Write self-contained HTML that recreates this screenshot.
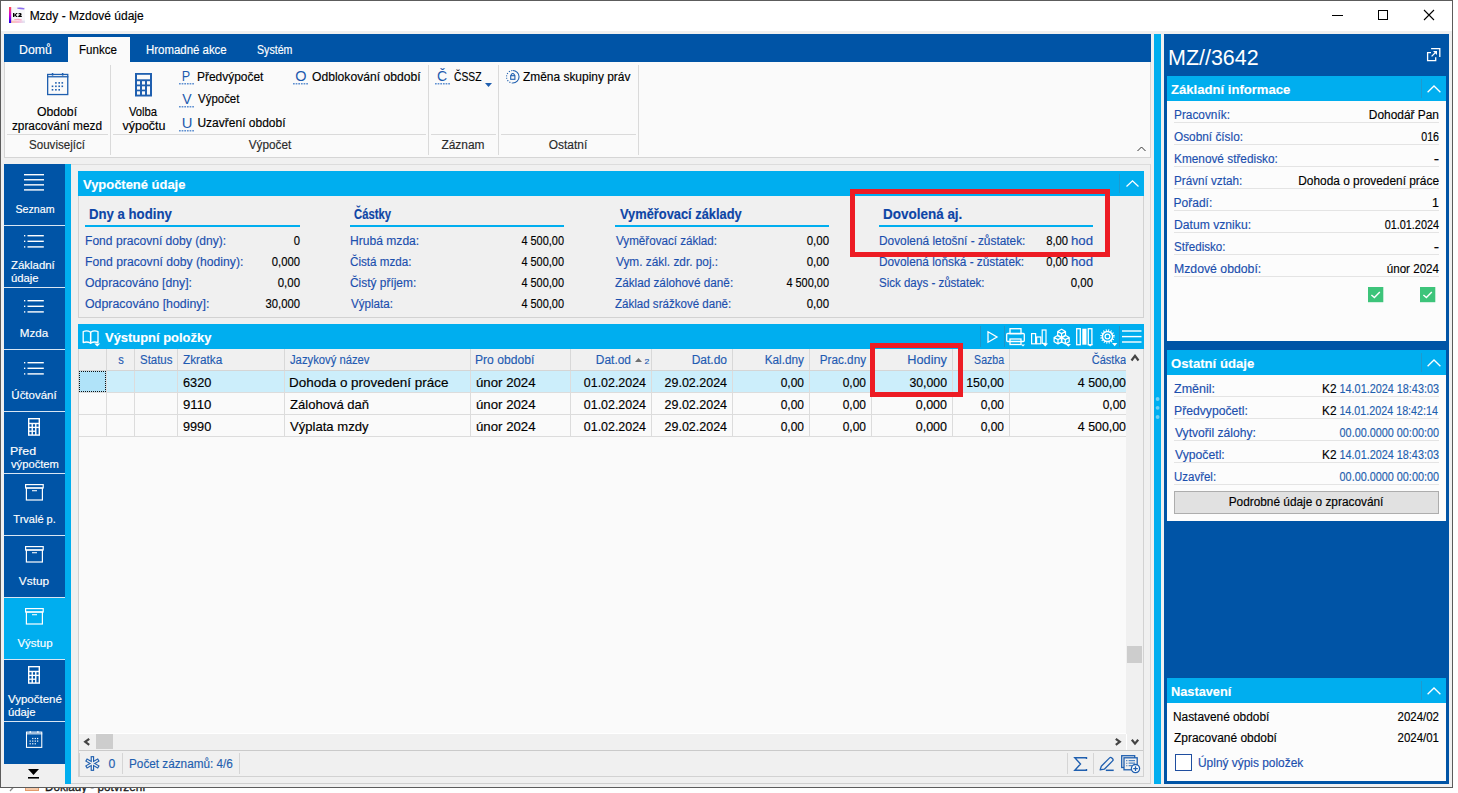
<!DOCTYPE html>
<html><head><meta charset="utf-8">
<style>
*{margin:0;padding:0;box-sizing:border-box}
html,body{width:1458px;height:793px;overflow:hidden;background:#fff;font-family:"Liberation Sans",sans-serif;color:#000;position:relative}
.a{position:absolute}
.t{position:absolute;white-space:nowrap;-webkit-text-stroke:0.15px currentColor}
svg{overflow:visible}
</style></head><body>
<div class="t" style="top:777.50px;font-size:13px;line-height:17px;color:#1a1a1a;left:44.57px;transform:scaleX(0.8962);transform-origin:0 0;-webkit-text-stroke:0.35px currentColor;">Doklady - potvrzení</div>
<div class="a" style="left:25px;top:781px;width:14px;height:10px;background:#F6C9A8;border:1px solid #E39B6C;"></div>
<svg class="a" style="left:9px;top:786px;" width="6" height="6" viewBox="0 0 6 6"><path d="M5 0.5L1 5" stroke="#888" stroke-width="1.2"/></svg>
<div class="a" style="left:0px;top:0px;width:1453px;height:788px;background:#F0F0F0;border:1px solid #5c5c5c;"></div>
<div class="a" style="left:1px;top:1px;width:1451px;height:30px;background:#fff;"></div>
<svg class="a" style="left:9px;top:7px;" width="16" height="16" viewBox="0 0 16 16"><defs><linearGradient id="kg" x1="0" y1="0" x2="0" y2="1"><stop offset="0" stop-color="#FF5050"/><stop offset=".5" stop-color="#D000D8"/><stop offset="1" stop-color="#1800E8"/></linearGradient><linearGradient id="kb" x1="0" y1="0" x2="1" y2="0"><stop offset="0" stop-color="#FF8A50"/><stop offset=".5" stop-color="#FF70B0"/><stop offset="1" stop-color="#C8D8F0"/></linearGradient></defs><rect x="0" y="0" width="16" height="16" fill="#F7F7FA"/><rect x="0" y="0" width="2.2" height="16" fill="url(#kg)"/><path d="M8 0.8Q12 0.2 15.5 1.2L15.2 2.6Q11.5 2.2 8.5 1.8Z" fill="#7A55F0" opacity=".85"/><rect x="2.2" y="13.6" width="13.8" height="2.4" fill="url(#kb)" opacity=".45"/><path d="M5 12.2Q9 11.2 13 12.4L12.5 13.5Q9 12.8 5.5 13.3Z" fill="#FF6FA0" opacity=".6"/><path d="M4 6H5.4V7.9L7.2 6H8.8L6.8 8L8.9 10H7.2L5.4 8.2V10H4Z M9.2 7Q9.6 6 11 6Q12.6 6 12.6 7.2Q12.6 8 11.3 8.8H12.8V10H9.2V9.1Q11.1 7.9 11.1 7.3Q11.1 6.9 10.8 6.9Q10.4 6.9 10.3 7.5Z" fill="#000"/></svg>
<div class="t" style="top:7.84px;font-size:12px;line-height:16px;color:#000;left:29.64px;">Mzdy - Mzdové údaje</div>
<div class="a" style="left:1332px;top:15px;width:11px;height:1px;background:#000;"></div>
<div class="a" style="left:1378px;top:10px;width:10px;height:10px;border:1px solid #000;"></div>
<svg class="a" style="left:1424px;top:10px;" width="10" height="10" viewBox="0 0 10 10"><path d="M0 0L10 10M10 0L0 10" stroke="#000" stroke-width="1.1"/></svg>
<div class="a" style="left:4px;top:34px;width:1147px;height:28px;background:#0054A6;"></div>
<div class="a" style="left:68px;top:37px;width:62px;height:25px;background:#FAFAFA;"></div>
<div class="t" style="top:41.84px;font-size:12px;line-height:16px;color:#fff;left:18.62px;transform:scaleX(1.0251);transform-origin:0 0;">Domů</div>
<div class="t" style="top:41.84px;font-size:12px;line-height:16px;color:#000;left:79.08px;transform:scaleX(0.9626);transform-origin:0 0;">Funkce</div>
<div class="t" style="top:41.84px;font-size:12px;line-height:16px;color:#fff;left:146.09px;transform:scaleX(0.9522);transform-origin:0 0;">Hromadné akce</div>
<div class="t" style="top:41.84px;font-size:12px;line-height:16px;color:#fff;left:256.58px;transform:scaleX(0.8849);transform-origin:0 0;">Systém</div>
<div class="a" style="left:4px;top:62px;width:1147px;height:96px;background:#FAFAFA;border:1px solid #D5D5D5;border-top:none;"></div>
<div class="a" style="left:110px;top:65px;width:1px;height:90px;background:#DADADA;"></div>
<div class="a" style="left:428px;top:65px;width:1px;height:90px;background:#DADADA;"></div>
<div class="a" style="left:498px;top:65px;width:1px;height:90px;background:#DADADA;"></div>
<div class="a" style="left:638px;top:65px;width:1px;height:90px;background:#DADADA;"></div>
<div class="a" style="left:7px;top:134px;width:101px;height:1px;background:#DADADA;"></div>
<div class="a" style="left:113px;top:134px;width:313px;height:1px;background:#DADADA;"></div>
<div class="a" style="left:431px;top:134px;width:65px;height:1px;background:#DADADA;"></div>
<div class="a" style="left:501px;top:134px;width:135px;height:1px;background:#DADADA;"></div>
<svg class="a" style="left:47px;top:73px;" width="22" height="23" viewBox="0 0 22 23"><g transform="scale(1.0)"><rect x="0.65" y="1.45" width="20.1" height="20.1" fill="none" stroke="#1F5FAF" stroke-width="1.3"/><rect x="0" y="3.1" width="21.4" height="1.3" fill="#1F5FAF"/><rect x="4.8" y="0" width="1.5" height="2.6" fill="#1F5FAF"/><rect x="14.9" y="0" width="1.5" height="2.6" fill="#1F5FAF"/><rect x="8.10" y="9.10" width="1.6" height="1.6" fill="#1F5FAF"/><rect x="11.40" y="9.10" width="1.6" height="1.6" fill="#1F5FAF"/><rect x="14.50" y="9.10" width="1.6" height="1.6" fill="#1F5FAF"/><rect x="4.70" y="12.50" width="1.6" height="1.6" fill="#1F5FAF"/><rect x="8.10" y="12.50" width="1.6" height="1.6" fill="#1F5FAF"/><rect x="11.40" y="12.50" width="1.6" height="1.6" fill="#1F5FAF"/><rect x="14.50" y="12.50" width="1.6" height="1.6" fill="#1F5FAF"/><rect x="4.70" y="16.00" width="1.6" height="1.6" fill="#1F5FAF"/><rect x="8.10" y="16.00" width="1.6" height="1.6" fill="#1F5FAF"/><rect x="11.40" y="16.00" width="1.6" height="1.6" fill="#1F5FAF"/></g></svg>
<svg class="a" style="left:135px;top:73px;" width="17" height="24" viewBox="0 0 17 24"><g transform="scale(1.0 1.0)"><rect x="0" y="0" width="17" height="23.5" fill="#1F5FAF"/><rect x="2" y="1.8" width="13" height="4.5" fill="#FAFAFA"/><rect x="2" y="8.2" width="3" height="3.3" fill="#FAFAFA"/><rect x="2" y="13.3" width="3" height="3.3" fill="#FAFAFA"/><rect x="2" y="18.3" width="3" height="3.3" fill="#FAFAFA"/><rect x="7" y="8.2" width="3" height="3.3" fill="#FAFAFA"/><rect x="7" y="13.3" width="3" height="3.3" fill="#FAFAFA"/><rect x="7" y="18.3" width="3" height="3.3" fill="#FAFAFA"/><rect x="12" y="8.2" width="3" height="3.3" fill="#FAFAFA"/><rect x="12" y="13.3" width="3" height="8.3" fill="#FAFAFA"/></g></svg>
<div class="t" style="top:104.24px;font-size:12px;line-height:16px;color:#000;left:-242.75px;width:600px;text-align:center;transform:scaleX(1.0211);transform-origin:50% 0;">Období</div>
<div class="t" style="top:118.14px;font-size:12px;line-height:16px;color:#000;left:-242.62px;width:600px;text-align:center;transform:scaleX(0.9863);transform-origin:50% 0;">zpracování mezd</div>
<div class="t" style="top:136.74px;font-size:12px;line-height:16px;color:#2a2a2a;left:-242.56px;width:600px;text-align:center;transform:scaleX(0.9635);transform-origin:50% 0;">Související</div>
<div class="t" style="top:103.64px;font-size:12px;line-height:16px;color:#000;left:-156.54px;width:600px;text-align:center;transform:scaleX(0.9396);transform-origin:50% 0;">Volba</div>
<div class="t" style="top:118.14px;font-size:12px;line-height:16px;color:#000;left:-156.09px;width:600px;text-align:center;transform:scaleX(1.0429);transform-origin:50% 0;">výpočtu</div>
<div class="t" style="top:66.20px;font-size:15px;line-height:20px;color:#1E5AAE;left:-113.61px;width:600px;text-align:center;transform:scaleX(0.8395);transform-origin:50% 0;-webkit-text-stroke:0;">P</div>
<svg class="a" style="left:179px;top:83.2px;" width="16" height="2" viewBox="0 0 16 2"><path d="M0 0.8H15.5" stroke="#5E8FD0" stroke-width="1.5" stroke-dasharray="1.7 0.95"/></svg>
<div class="t" style="top:68.64px;font-size:12px;line-height:16px;color:#000;left:197.34px;transform:scaleX(0.9960);transform-origin:0 0;">Předvýpočet</div>
<div class="t" style="top:89.00px;font-size:15px;line-height:20px;color:#1E5AAE;left:-113.42px;width:600px;text-align:center;transform:scaleX(0.9353);transform-origin:50% 0;-webkit-text-stroke:0;">V</div>
<svg class="a" style="left:179px;top:106.0px;" width="16" height="2" viewBox="0 0 16 2"><path d="M0 0.8H15.5" stroke="#5E8FD0" stroke-width="1.5" stroke-dasharray="1.7 0.95"/></svg>
<div class="t" style="top:91.44px;font-size:12px;line-height:16px;color:#000;left:198.30px;transform:scaleX(0.9553);transform-origin:0 0;">Výpočet</div>
<div class="t" style="top:112.70px;font-size:15px;line-height:20px;color:#1E5AAE;left:-113.38px;width:600px;text-align:center;transform:scaleX(0.9885);transform-origin:50% 0;-webkit-text-stroke:0;">U</div>
<svg class="a" style="left:179px;top:129.7px;" width="16" height="2" viewBox="0 0 16 2"><path d="M0 0.8H15.5" stroke="#5E8FD0" stroke-width="1.5" stroke-dasharray="1.7 0.95"/></svg>
<div class="t" style="top:115.14px;font-size:12px;line-height:16px;color:#000;left:197.46px;">Uzavření období</div>
<div class="t" style="top:66.20px;font-size:15px;line-height:20px;color:#1E5AAE;left:0.66px;width:600px;text-align:center;transform:scaleX(0.9662);transform-origin:50% 0;-webkit-text-stroke:0;">O</div>
<svg class="a" style="left:293px;top:83.2px;" width="16" height="2" viewBox="0 0 16 2"><path d="M0 0.8H15.5" stroke="#5E8FD0" stroke-width="1.5" stroke-dasharray="1.7 0.95"/></svg>
<div class="t" style="top:68.64px;font-size:12px;line-height:16px;color:#000;left:312.02px;transform:scaleX(1.0101);transform-origin:0 0;">Odblokování období</div>
<div class="t" style="top:137.24px;font-size:12px;line-height:16px;color:#2a2a2a;left:-30.04px;width:600px;text-align:center;transform:scaleX(0.9807);transform-origin:50% 0;">Výpočet</div>
<div class="t" style="top:66.20px;font-size:15px;line-height:20px;color:#1E5AAE;left:142.37px;width:600px;text-align:center;transform:scaleX(0.9375);transform-origin:50% 0;-webkit-text-stroke:0;">Č</div>
<svg class="a" style="left:435px;top:83.2px;" width="16" height="2" viewBox="0 0 16 2"><path d="M0 0.8H15.5" stroke="#5E8FD0" stroke-width="1.5" stroke-dasharray="1.7 0.95"/></svg>
<div class="t" style="top:68.64px;font-size:12px;line-height:16px;color:#000;left:453.78px;transform:scaleX(0.8591);transform-origin:0 0;">ČSSZ</div>
<svg class="a" style="left:485px;top:83px;" width="7" height="4" viewBox="0 0 7 4"><path d="M0 0H7L3.5 4Z" fill="#1F5FAF"/></svg>
<div class="t" style="top:137.24px;font-size:12px;line-height:16px;color:#2a2a2a;left:162.89px;width:600px;text-align:center;transform:scaleX(0.9943);transform-origin:50% 0;">Záznam</div>
<svg class="a" style="left:506px;top:70px;" width="14" height="14" viewBox="0 0 14 14"><path d="M6.8 0.55A6.25 6.25 0 0 1 6.8 13.05" fill="none" stroke="#1F5FAF" stroke-width="1.1"/><path d="M6.8 13.05A6.25 6.25 0 0 1 6.8 0.55" fill="none" stroke="#1F5FAF" stroke-width="1.1" stroke-dasharray="1.1 1.4"/><rect x="4.7" y="5.7" width="4.2" height="3.6" fill="none" stroke="#1F5FAF" stroke-width="1.1"/><path d="M5.2 5.7V4.7Q6.8 2.4 8.4 4.7V5.7" fill="none" stroke="#1F5FAF" stroke-width="1.1"/></svg>
<div class="t" style="top:68.64px;font-size:12px;line-height:16px;color:#000;left:523.44px;transform:scaleX(0.9941);transform-origin:0 0;">Změna skupiny práv</div>
<div class="t" style="top:137.24px;font-size:12px;line-height:16px;color:#2a2a2a;left:268.02px;width:600px;text-align:center;transform:scaleX(0.9927);transform-origin:50% 0;">Ostatní</div>
<svg class="a" style="left:1137px;top:145.5px;" width="9" height="6" viewBox="0 0 9 6"><path d="M0.5 5L4.5 1L8.5 5" fill="none" stroke="#333" stroke-width="1"/></svg>
<div class="a" style="left:4px;top:164px;width:61px;height:600px;background:#0054A6;"></div>
<div class="a" style="left:65px;top:164px;width:6px;height:620px;background:#00AEEF;"></div>
<div class="a" style="left:4px;top:598px;width:61px;height:61px;background:#00AEEF;"></div>
<div class="a" style="left:4px;top:225px;width:61px;height:1px;background:#D9E6F3;"></div>
<div class="a" style="left:4px;top:287px;width:61px;height:1px;background:#D9E6F3;"></div>
<div class="a" style="left:4px;top:349px;width:61px;height:1px;background:#D9E6F3;"></div>
<div class="a" style="left:4px;top:411px;width:61px;height:1px;background:#D9E6F3;"></div>
<div class="a" style="left:4px;top:473px;width:61px;height:1px;background:#D9E6F3;"></div>
<div class="a" style="left:4px;top:535px;width:61px;height:1px;background:#D9E6F3;"></div>
<div class="a" style="left:4px;top:597px;width:61px;height:1px;background:#D9E6F3;"></div>
<div class="a" style="left:4px;top:659px;width:61px;height:1px;background:#D9E6F3;"></div>
<div class="a" style="left:4px;top:721px;width:61px;height:1px;background:#D9E6F3;"></div>
<svg class="a" style="left:24px;top:174px;" width="20" height="17" viewBox="0 0 20 17"><rect x="0" y="0.00" width="20" height="1.4" fill="#fff"/><rect x="0" y="5.07" width="20" height="1.4" fill="#fff"/><rect x="0" y="10.14" width="20" height="1.4" fill="#fff"/><rect x="0" y="15.21" width="20" height="1.4" fill="#fff"/></svg>
<div class="t" style="top:201.99px;font-size:11px;line-height:14px;color:#fff;left:-265.30px;width:600px;text-align:center;transform:scaleX(0.9677);transform-origin:50% 0;">Seznam</div>
<svg class="a" style="left:24px;top:235px;" width="20" height="14" viewBox="0 0 20 14"><rect x="0" y="0.00" width="1.3" height="1.4" fill="#fff"/><rect x="3.5" y="0.00" width="16.3" height="1.4" fill="#fff"/><rect x="0" y="5.60" width="1.3" height="1.4" fill="#fff"/><rect x="3.5" y="5.60" width="16.3" height="1.4" fill="#fff"/><rect x="0" y="11.20" width="1.3" height="1.4" fill="#fff"/><rect x="3.5" y="11.20" width="16.3" height="1.4" fill="#fff"/></svg>
<div class="t" style="top:257.59px;font-size:11px;line-height:14px;color:#fff;left:10.96px;transform:scaleX(1.0379);transform-origin:0 0;">Základní</div>
<div class="t" style="top:270.89px;font-size:11px;line-height:14px;color:#fff;left:10.62px;transform:scaleX(1.0251);transform-origin:0 0;">údaje</div>
<svg class="a" style="left:24px;top:300px;" width="20" height="14" viewBox="0 0 20 14"><rect x="0" y="0.00" width="1.3" height="1.4" fill="#fff"/><rect x="3.5" y="0.00" width="16.3" height="1.4" fill="#fff"/><rect x="0" y="5.60" width="1.3" height="1.4" fill="#fff"/><rect x="3.5" y="5.60" width="16.3" height="1.4" fill="#fff"/><rect x="0" y="11.20" width="1.3" height="1.4" fill="#fff"/><rect x="3.5" y="11.20" width="16.3" height="1.4" fill="#fff"/></svg>
<div class="t" style="top:325.99px;font-size:11px;line-height:14px;color:#fff;left:-266.29px;width:600px;text-align:center;transform:scaleX(1.0549);transform-origin:50% 0;">Mzda</div>
<svg class="a" style="left:24px;top:362px;" width="20" height="14" viewBox="0 0 20 14"><rect x="0" y="0.00" width="1.3" height="1.4" fill="#fff"/><rect x="3.5" y="0.00" width="16.3" height="1.4" fill="#fff"/><rect x="0" y="5.60" width="1.3" height="1.4" fill="#fff"/><rect x="3.5" y="5.60" width="16.3" height="1.4" fill="#fff"/><rect x="0" y="11.20" width="1.3" height="1.4" fill="#fff"/><rect x="3.5" y="11.20" width="16.3" height="1.4" fill="#fff"/></svg>
<div class="t" style="top:387.99px;font-size:11px;line-height:14px;color:#fff;left:-265.72px;width:600px;text-align:center;transform:scaleX(1.0426);transform-origin:50% 0;">Účtování</div>
<svg class="a" style="left:28px;top:418px;" width="17" height="24" viewBox="0 0 17 24"><g transform="scale(0.706 0.757)"><rect x="0" y="0" width="17" height="23.5" fill="#fff"/><rect x="2" y="1.8" width="13" height="4.5" fill="#0054A6"/><rect x="2" y="8.2" width="3" height="3.3" fill="#0054A6"/><rect x="2" y="13.3" width="3" height="3.3" fill="#0054A6"/><rect x="2" y="18.3" width="3" height="3.3" fill="#0054A6"/><rect x="7" y="8.2" width="3" height="3.3" fill="#0054A6"/><rect x="7" y="13.3" width="3" height="3.3" fill="#0054A6"/><rect x="7" y="18.3" width="3" height="3.3" fill="#0054A6"/><rect x="12" y="8.2" width="3" height="3.3" fill="#0054A6"/><rect x="12" y="13.3" width="3" height="8.3" fill="#0054A6"/></g></svg>
<div class="t" style="top:443.79px;font-size:11px;line-height:14px;color:#fff;left:9.51px;transform:scaleX(1.1249);transform-origin:0 0;">Před</div>
<div class="t" style="top:456.89px;font-size:11px;line-height:14px;color:#fff;left:10.50px;transform:scaleX(1.0168);transform-origin:0 0;">výpočtem</div>
<svg class="a" style="left:25px;top:484px;" width="19" height="17" viewBox="0 0 19 17"><rect x="0.6" y="0.6" width="17.6" height="3.4" fill="none" stroke="#fff" stroke-width="1.2"/><rect x="1.4" y="4" width="16" height="12" fill="none" stroke="#fff" stroke-width="1.2"/><rect x="7" y="6" width="5" height="1.3" fill="#fff" opacity=".8"/></svg>
<div class="t" style="top:511.99px;font-size:11px;line-height:14px;color:#fff;left:-265.45px;width:600px;text-align:center;">Trvalé p.</div>
<svg class="a" style="left:25px;top:546px;" width="19" height="17" viewBox="0 0 19 17"><rect x="0.6" y="0.6" width="17.6" height="3.4" fill="none" stroke="#fff" stroke-width="1.2"/><rect x="1.4" y="4" width="16" height="12" fill="none" stroke="#fff" stroke-width="1.2"/><rect x="7" y="6" width="5" height="1.3" fill="#fff" opacity=".8"/></svg>
<div class="t" style="top:573.99px;font-size:11px;line-height:14px;color:#fff;left:-265.78px;width:600px;text-align:center;transform:scaleX(1.0750);transform-origin:50% 0;">Vstup</div>
<svg class="a" style="left:25px;top:608px;" width="19" height="17" viewBox="0 0 19 17"><rect x="0.6" y="0.6" width="17.6" height="3.4" fill="none" stroke="#fff" stroke-width="1.2"/><rect x="1.4" y="4" width="16" height="12" fill="none" stroke="#fff" stroke-width="1.2"/><rect x="7" y="6" width="5" height="1.3" fill="#fff" opacity=".8"/></svg>
<div class="t" style="top:635.99px;font-size:11px;line-height:14px;color:#fff;left:-265.39px;width:600px;text-align:center;transform:scaleX(1.0415);transform-origin:50% 0;">Výstup</div>
<svg class="a" style="left:28px;top:666px;" width="17" height="24" viewBox="0 0 17 24"><g transform="scale(0.706 0.757)"><rect x="0" y="0" width="17" height="23.5" fill="#fff"/><rect x="2" y="1.8" width="13" height="4.5" fill="#0054A6"/><rect x="2" y="8.2" width="3" height="3.3" fill="#0054A6"/><rect x="2" y="13.3" width="3" height="3.3" fill="#0054A6"/><rect x="2" y="18.3" width="3" height="3.3" fill="#0054A6"/><rect x="7" y="8.2" width="3" height="3.3" fill="#0054A6"/><rect x="7" y="13.3" width="3" height="3.3" fill="#0054A6"/><rect x="7" y="18.3" width="3" height="3.3" fill="#0054A6"/><rect x="12" y="8.2" width="3" height="3.3" fill="#0054A6"/><rect x="12" y="13.3" width="3" height="8.3" fill="#0054A6"/></g></svg>
<div class="t" style="top:691.99px;font-size:11px;line-height:14px;color:#fff;left:8.30px;transform:scaleX(1.0440);transform-origin:0 0;">Vypočtené</div>
<div class="t" style="top:705.09px;font-size:11px;line-height:14px;color:#fff;left:7.62px;transform:scaleX(1.0251);transform-origin:0 0;">údaje</div>
<svg class="a" style="left:26px;top:731px;" width="22" height="23" viewBox="0 0 22 23"><g transform="scale(0.76)"><rect x="0.65" y="1.45" width="20.1" height="20.1" fill="none" stroke="#fff" stroke-width="1.4"/><rect x="0" y="3.1" width="21.4" height="1.3" fill="#fff"/><rect x="4.8" y="0" width="1.5" height="2.6" fill="#fff"/><rect x="14.9" y="0" width="1.5" height="2.6" fill="#fff"/><rect x="8.10" y="9.10" width="1.6" height="1.6" fill="#fff"/><rect x="11.40" y="9.10" width="1.6" height="1.6" fill="#fff"/><rect x="14.50" y="9.10" width="1.6" height="1.6" fill="#fff"/><rect x="4.70" y="12.50" width="1.6" height="1.6" fill="#fff"/><rect x="8.10" y="12.50" width="1.6" height="1.6" fill="#fff"/><rect x="11.40" y="12.50" width="1.6" height="1.6" fill="#fff"/><rect x="14.50" y="12.50" width="1.6" height="1.6" fill="#fff"/><rect x="4.70" y="16.00" width="1.6" height="1.6" fill="#fff"/><rect x="8.10" y="16.00" width="1.6" height="1.6" fill="#fff"/><rect x="11.40" y="16.00" width="1.6" height="1.6" fill="#fff"/></g></svg>
<div class="t" style="top:761.49px;font-size:11px;line-height:14px;color:#fff;left:-265.70px;width:600px;text-align:center;transform:scaleX(0.8979);transform-origin:50% 0;">Období</div>
<div class="a" style="left:4px;top:764px;width:61px;height:20px;background:#F0F0F0;"></div>
<svg class="a" style="left:28px;top:769px;" width="12" height="10" viewBox="0 0 12 10"><path d="M0 0H11L5.5 6Z" fill="#000"/><rect x="0" y="8" width="11" height="1.6" fill="#000"/></svg>
<div class="a" style="left:71px;top:164px;width:1080px;height:620px;background:#F0F0F0;border-top:1px solid #DCDCDC;"></div>
<div class="a" style="left:1150px;top:164px;width:1px;height:620px;background:#D6D6D6;"></div>
<div class="a" style="left:78px;top:171px;width:1066px;height:147px;background:#F0F0F0;border:1px solid #D2D2D2;border-top:none;"></div>
<div class="a" style="left:78px;top:171px;width:1066px;height:25px;background:#00AEEF;"></div>
<div class="t" style="top:175.80px;font-size:13px;line-height:17px;color:#fff;font-weight:bold;left:82.70px;transform:scaleX(0.9957);transform-origin:0 0;">Vypočtené údaje</div>
<div class="a" style="left:1119px;top:174px;width:1px;height:19px;background:#1E9ACF;"></div>
<svg class="a" style="left:1126px;top:180px;" width="13" height="7" viewBox="0 0 13 7"><path d="M0.5 6.5L6.5 0.8L12.5 6.5" fill="none" stroke="#fff" stroke-width="1.3"/></svg>
<div class="t" style="top:205.45px;font-size:14px;line-height:18px;color:#0D45A6;font-weight:bold;left:88.81px;transform:scaleX(0.9417);transform-origin:0 0;">Dny a hodiny</div>
<div class="a" style="left:85px;top:225px;width:215px;height:2px;background:#00AEEF;"></div>
<div class="t" style="top:233.34px;font-size:12px;line-height:16px;color:#1B4FAE;left:84.83px;transform:scaleX(1.0072);transform-origin:0 0;">Fond pracovní doby (dny):</div>
<div class="t" style="top:233.34px;font-size:12px;line-height:16px;color:#000;left:-299.59px;width:600px;text-align:right;transform:scaleX(0.9354);transform-origin:100% 0;">0</div>
<div class="t" style="top:254.24px;font-size:12px;line-height:16px;color:#1B4FAE;left:84.83px;transform:scaleX(1.0144);transform-origin:0 0;">Fond pracovní doby (hodiny):</div>
<div class="t" style="top:254.24px;font-size:12px;line-height:16px;color:#000;left:-299.64px;width:600px;text-align:right;transform:scaleX(0.9392);transform-origin:100% 0;">0,000</div>
<div class="t" style="top:275.14px;font-size:12px;line-height:16px;color:#1B4FAE;left:85.31px;transform:scaleX(1.0213);transform-origin:0 0;">Odpracováno [dny]:</div>
<div class="t" style="top:275.14px;font-size:12px;line-height:16px;color:#000;left:-299.59px;width:600px;text-align:right;transform:scaleX(0.9530);transform-origin:100% 0;">0,00</div>
<div class="t" style="top:296.04px;font-size:12px;line-height:16px;color:#1B4FAE;left:85.31px;transform:scaleX(1.0305);transform-origin:0 0;">Odpracováno [hodiny]:</div>
<div class="t" style="top:296.04px;font-size:12px;line-height:16px;color:#000;left:-299.57px;width:600px;text-align:right;transform:scaleX(0.9392);transform-origin:100% 0;">30,000</div>
<div class="t" style="top:205.45px;font-size:14px;line-height:18px;color:#0D45A6;font-weight:bold;left:354.15px;transform:scaleX(0.8047);transform-origin:0 0;">Částky</div>
<div class="a" style="left:350px;top:225px;width:214px;height:2px;background:#00AEEF;"></div>
<div class="t" style="top:233.34px;font-size:12px;line-height:16px;color:#1B4FAE;left:349.83px;transform:scaleX(1.0072);transform-origin:0 0;">Hrubá mzda:</div>
<div class="t" style="top:233.34px;font-size:12px;line-height:16px;color:#000;left:-35.65px;width:600px;text-align:right;transform:scaleX(0.9115);transform-origin:100% 0;">4 500,00</div>
<div class="t" style="top:254.24px;font-size:12px;line-height:16px;color:#1B4FAE;left:350.22px;transform:scaleX(0.9711);transform-origin:0 0;">Čistá mzda:</div>
<div class="t" style="top:254.24px;font-size:12px;line-height:16px;color:#000;left:-35.65px;width:600px;text-align:right;transform:scaleX(0.9115);transform-origin:100% 0;">4 500,00</div>
<div class="t" style="top:275.14px;font-size:12px;line-height:16px;color:#1B4FAE;left:350.20px;transform:scaleX(0.9932);transform-origin:0 0;">Čistý příjem:</div>
<div class="t" style="top:275.14px;font-size:12px;line-height:16px;color:#000;left:-35.65px;width:600px;text-align:right;transform:scaleX(0.9115);transform-origin:100% 0;">4 500,00</div>
<div class="t" style="top:296.04px;font-size:12px;line-height:16px;color:#1B4FAE;left:350.80px;transform:scaleX(0.9679);transform-origin:0 0;">Výplata:</div>
<div class="t" style="top:296.04px;font-size:12px;line-height:16px;color:#000;left:-35.65px;width:600px;text-align:right;transform:scaleX(0.9115);transform-origin:100% 0;">4 500,00</div>
<div class="t" style="top:205.45px;font-size:14px;line-height:18px;color:#0D45A6;font-weight:bold;left:619.60px;transform:scaleX(0.9179);transform-origin:0 0;">Vyměřovací základy</div>
<div class="a" style="left:615px;top:225px;width:214px;height:2px;background:#00AEEF;"></div>
<div class="t" style="top:233.34px;font-size:12px;line-height:16px;color:#1B4FAE;left:615.80px;transform:scaleX(0.9690);transform-origin:0 0;">Vyměřovací základ:</div>
<div class="t" style="top:233.34px;font-size:12px;line-height:16px;color:#000;left:229.41px;width:600px;text-align:right;transform:scaleX(0.9530);transform-origin:100% 0;">0,00</div>
<div class="t" style="top:254.24px;font-size:12px;line-height:16px;color:#1B4FAE;left:615.80px;transform:scaleX(0.9856);transform-origin:0 0;">Vym. zákl. zdr. poj.:</div>
<div class="t" style="top:254.24px;font-size:12px;line-height:16px;color:#000;left:229.41px;width:600px;text-align:right;transform:scaleX(0.9530);transform-origin:100% 0;">0,00</div>
<div class="t" style="top:275.14px;font-size:12px;line-height:16px;color:#1B4FAE;left:615.45px;transform:scaleX(0.9784);transform-origin:0 0;">Základ zálohové daně:</div>
<div class="t" style="top:275.14px;font-size:12px;line-height:16px;color:#000;left:229.35px;width:600px;text-align:right;transform:scaleX(0.9115);transform-origin:100% 0;">4 500,00</div>
<div class="t" style="top:296.04px;font-size:12px;line-height:16px;color:#1B4FAE;left:615.45px;transform:scaleX(0.9624);transform-origin:0 0;">Základ srážkové daně:</div>
<div class="t" style="top:296.04px;font-size:12px;line-height:16px;color:#000;left:229.41px;width:600px;text-align:right;transform:scaleX(0.9530);transform-origin:100% 0;">0,00</div>
<div class="t" style="top:205.45px;font-size:14px;line-height:18px;color:#0D45A6;font-weight:bold;left:882.79px;transform:scaleX(0.9623);transform-origin:0 0;">Dovolená aj.</div>
<div class="a" style="left:879px;top:225px;width:214px;height:2px;background:#00AEEF;"></div>
<div class="t" style="top:233.34px;font-size:12px;line-height:16px;color:#1B4FAE;left:878.85px;transform:scaleX(0.9888);transform-origin:0 0;">Dovolená letošní - zůstatek:</div>
<div class="t" style="top:254.24px;font-size:12px;line-height:16px;color:#1B4FAE;left:878.85px;transform:scaleX(0.9846);transform-origin:0 0;">Dovolená loňská - zůstatek:</div>
<div class="t" style="top:275.14px;font-size:12px;line-height:16px;color:#1B4FAE;left:879.34px;transform:scaleX(0.9587);transform-origin:0 0;">Sick days - zůstatek:</div>
<div class="t" style="top:275.14px;font-size:12px;line-height:16px;color:#000;left:493.41px;width:600px;text-align:right;transform:scaleX(0.9530);transform-origin:100% 0;">0,00</div>
<div class="t" style="top:233.34px;font-size:12px;line-height:16px;color:#000;left:467.61px;width:600px;text-align:right;transform:scaleX(0.9358);transform-origin:100% 0;">8,00</div>
<div class="t" style="top:233.34px;font-size:12px;line-height:16px;color:#1B4FAE;left:492.77px;width:600px;text-align:right;transform:scaleX(1.1022);transform-origin:100% 0;">hod</div>
<div class="t" style="top:254.24px;font-size:12px;line-height:16px;color:#000;left:467.60px;width:600px;text-align:right;transform:scaleX(0.9309);transform-origin:100% 0;">0,00</div>
<div class="t" style="top:254.24px;font-size:12px;line-height:16px;color:#1B4FAE;left:492.77px;width:600px;text-align:right;transform:scaleX(1.1022);transform-origin:100% 0;">hod</div>
<div class="a" style="left:78px;top:324px;width:1066px;height:453px;background:#F0F0F0;border:1px solid #D2D2D2;border-top:none;"></div>
<div class="a" style="left:78px;top:324px;width:1066px;height:25px;background:#00AEEF;"></div>
<svg class="a" style="left:82px;top:330px;" width="19" height="17" viewBox="0 0 19 17"><path d="M8.6 2.2C6.6 0.9 3.2 0.8 1.2 1.5V12.6C3.2 11.9 6.6 12 8.6 13.2Z" fill="none" stroke="#fff" stroke-width="1.3" stroke-linejoin="round"/><path d="M8.6 2.2C10.6 0.9 14 0.8 16 1.5V12.6C14 11.9 10.6 12 8.6 13.2Z" fill="none" stroke="#fff" stroke-width="1.3" stroke-linejoin="round"/><path d="M12.3 13.4H18.2L15.25 16.4Z" fill="#fff"/></svg>
<div class="t" style="top:329.19px;font-size:13.6px;line-height:18px;color:#fff;font-weight:bold;left:105.30px;transform:scaleX(0.9515);transform-origin:0 0;">Výstupní položky</div>
<div class="a" style="left:979.6px;top:326px;width:1px;height:21px;background:#1F95C8;"></div>
<div class="a" style="left:1003.6px;top:326px;width:1px;height:21px;background:#1F95C8;"></div>
<div class="a" style="left:1119.4px;top:326px;width:1px;height:21px;background:#1F95C8;"></div>
<svg class="a" style="left:987px;top:331px;" width="11" height="12" viewBox="0 0 11 12"><path d="M1 0.8L10 6L1 11.2Z" fill="none" stroke="#fff" stroke-width="1.3"/></svg>
<svg class="a" style="left:1006px;top:328px;" width="20" height="19" viewBox="0 0 20 19"><rect x="4" y="0.7" width="11" height="5" fill="none" stroke="#fff" stroke-width="1.3"/><rect x="0.7" y="5.5" width="17.6" height="8" rx="1" fill="none" stroke="#fff" stroke-width="1.3"/><rect x="4" y="11" width="11" height="5.5" fill="none" stroke="#fff" stroke-width="1.3"/><path d="M15 16.5H19L17 18.5Z" fill="#fff"/></svg>
<svg class="a" style="left:1031px;top:329px;" width="18" height="18" viewBox="0 0 18 18"><rect x="0.6" y="4.6" width="4" height="10.2" fill="none" stroke="#fff" stroke-width="1.2"/><rect x="5.6" y="8" width="4.2" height="6.8" fill="none" stroke="#fff" stroke-width="1.2"/><rect x="11.2" y="1" width="3.8" height="13.4" fill="none" stroke="#fff" stroke-width="1.2"/><path d="M11.5 14.6H17L14.2 17.6Z" fill="#fff"/></svg>
<svg class="a" style="left:1053px;top:329px;" width="19" height="18" viewBox="0 0 19 18"><path d="M8.60 0.31 L12.50 2.45 L12.50 6.74 L8.60 8.89 L4.70 6.74 L4.70 2.45Z M4.70 2.45 L8.60 4.60 L12.50 2.45 M8.60 4.60 L8.60 8.89 M5.00 6.31 L8.90 8.46 L8.90 12.74 L5.00 14.89 L1.10 12.74 L1.10 8.46Z M1.10 8.46 L5.00 10.60 L8.90 8.46 M5.00 10.60 L5.00 14.89 M12.30 6.31 L16.20 8.46 L16.20 12.74 L12.30 14.89 L8.40 12.74 L8.40 8.46Z M8.40 8.46 L12.30 10.60 L16.20 8.46 M12.30 10.60 L12.30 14.89" fill="none" stroke="#fff" stroke-width="1.25" stroke-linejoin="round"/><path d="M12.5 15H18L15.3 17.7Z" fill="#fff"/></svg>
<svg class="a" style="left:1076px;top:328px;" width="19" height="19" viewBox="0 0 19 19"><rect x="0.7" y="0.7" width="3.6" height="16" fill="none" stroke="#fff" stroke-width="1.3"/><rect x="6.3" y="0.7" width="4.2" height="16" fill="#fff"/><rect x="12.3" y="0.7" width="3.6" height="16" fill="none" stroke="#fff" stroke-width="1.3"/><path d="M11.5 16H17L14.2 18.6Z" fill="#fff"/></svg>
<svg class="a" style="left:1100px;top:329px;" width="19" height="18" viewBox="0 0 19 18"><circle cx="7.5" cy="7.5" r="5.1" fill="none" stroke="#fff" stroke-width="1.5"/><circle cx="7.5" cy="7.5" r="6.3" fill="none" stroke="#fff" stroke-width="1.9" stroke-dasharray="1.0 1.47"/><circle cx="7.5" cy="7.5" r="2.4" fill="none" stroke="#fff" stroke-width="1.3"/><path d="M12 14H17.3L14.65 17.2Z" fill="#fff"/></svg>
<svg class="a" style="left:1122px;top:330px;" width="20" height="13" viewBox="0 0 20 13"><rect x="0" y="0.3" width="19.5" height="1.4" fill="#fff"/><rect x="0" y="5.9" width="19.5" height="1.4" fill="#fff"/><rect x="0" y="11.3" width="19.5" height="1.4" fill="#fff"/></svg>
<div class="a" style="left:79px;top:349px;width:1047px;height:21px;background:#F0F0F0;"></div>
<div class="a" style="left:79px;top:370px;width:1047px;height:1px;background:#D5D5D5;"></div>
<div class="a" style="left:79px;top:371px;width:1047px;height:363px;background:#FAFAFA;"></div>
<div class="a" style="left:79px;top:371px;width:1047px;height:21px;background:#CCEEFB;"></div>
<div class="a" style="left:79px;top:392px;width:1047px;height:1px;background:#DCDCDC;"></div>
<div class="a" style="left:79px;top:414px;width:1047px;height:1px;background:#DCDCDC;"></div>
<div class="a" style="left:79px;top:436px;width:1047px;height:1px;background:#DCDCDC;"></div>
<div class="a" style="left:106px;top:349px;width:1px;height:21px;background:#D8D8D8;"></div>
<div class="a" style="left:106px;top:371px;width:1px;height:65px;background:#DCDCDC;"></div>
<div class="a" style="left:134px;top:349px;width:1px;height:21px;background:#D8D8D8;"></div>
<div class="a" style="left:134px;top:371px;width:1px;height:65px;background:#DCDCDC;"></div>
<div class="a" style="left:177px;top:349px;width:1px;height:21px;background:#D8D8D8;"></div>
<div class="a" style="left:177px;top:371px;width:1px;height:65px;background:#DCDCDC;"></div>
<div class="a" style="left:284px;top:349px;width:1px;height:21px;background:#D8D8D8;"></div>
<div class="a" style="left:284px;top:371px;width:1px;height:65px;background:#DCDCDC;"></div>
<div class="a" style="left:470px;top:349px;width:1px;height:21px;background:#D8D8D8;"></div>
<div class="a" style="left:470px;top:371px;width:1px;height:65px;background:#DCDCDC;"></div>
<div class="a" style="left:570px;top:349px;width:1px;height:21px;background:#D8D8D8;"></div>
<div class="a" style="left:570px;top:371px;width:1px;height:65px;background:#DCDCDC;"></div>
<div class="a" style="left:651px;top:349px;width:1px;height:21px;background:#D8D8D8;"></div>
<div class="a" style="left:651px;top:371px;width:1px;height:65px;background:#DCDCDC;"></div>
<div class="a" style="left:732px;top:349px;width:1px;height:21px;background:#D8D8D8;"></div>
<div class="a" style="left:732px;top:371px;width:1px;height:65px;background:#DCDCDC;"></div>
<div class="a" style="left:809px;top:349px;width:1px;height:21px;background:#D8D8D8;"></div>
<div class="a" style="left:809px;top:371px;width:1px;height:65px;background:#DCDCDC;"></div>
<div class="a" style="left:871px;top:349px;width:1px;height:21px;background:#D8D8D8;"></div>
<div class="a" style="left:871px;top:371px;width:1px;height:65px;background:#DCDCDC;"></div>
<div class="a" style="left:952px;top:349px;width:1px;height:21px;background:#D8D8D8;"></div>
<div class="a" style="left:952px;top:371px;width:1px;height:65px;background:#DCDCDC;"></div>
<div class="a" style="left:1009px;top:349px;width:1px;height:21px;background:#D8D8D8;"></div>
<div class="a" style="left:1009px;top:371px;width:1px;height:65px;background:#DCDCDC;"></div>
<div class="a" style="left:79px;top:371px;width:27px;height:21px;background:#B0E3F9;border:1px dotted #111;"></div>
<div class="t" style="top:351.74px;font-size:12px;line-height:16px;color:#1F5BB2;left:-179.14px;width:600px;text-align:center;transform:scaleX(0.9259);transform-origin:50% 0;">s</div>
<div class="t" style="top:351.74px;font-size:12px;line-height:16px;color:#1F5BB2;left:139.74px;transform:scaleX(0.9541);transform-origin:0 0;">Status</div>
<div class="t" style="top:351.74px;font-size:12px;line-height:16px;color:#1F5BB2;left:182.65px;transform:scaleX(0.9819);transform-origin:0 0;">Zkratka</div>
<div class="t" style="top:351.74px;font-size:12px;line-height:16px;color:#1F5BB2;left:289.79px;transform:scaleX(0.9374);transform-origin:0 0;">Jazykový název</div>
<div class="t" style="top:351.74px;font-size:12px;line-height:16px;color:#1F5BB2;left:475.43px;transform:scaleX(1.0100);transform-origin:0 0;">Pro období</div>
<div class="t" style="top:351.74px;font-size:12px;line-height:16px;color:#1F5BB2;left:30.87px;width:600px;text-align:right;transform:scaleX(0.9935);transform-origin:100% 0;">Dat.od</div>
<svg class="a" style="left:635px;top:358px;" width="7" height="4" viewBox="0 0 7 4"><path d="M0 4L3.5 0L7 4Z" fill="#707070"/></svg>
<div class="t" style="top:356.83px;font-size:8px;line-height:10px;color:#1F5BB2;left:346.98px;width:600px;text-align:center;transform:scaleX(1.0870);transform-origin:50% 0;">2</div>
<div class="t" style="top:351.74px;font-size:12px;line-height:16px;color:#1F5BB2;left:127.03px;width:600px;text-align:right;">Dat.do</div>
<div class="t" style="top:351.74px;font-size:12px;line-height:16px;color:#1F5BB2;left:204.04px;width:600px;text-align:right;transform:scaleX(0.9816);transform-origin:100% 0;">Kal.dny</div>
<div class="t" style="top:351.74px;font-size:12px;line-height:16px;color:#1F5BB2;left:265.85px;width:600px;text-align:right;transform:scaleX(0.9755);transform-origin:100% 0;">Prac.dny</div>
<div class="t" style="top:351.74px;font-size:12px;line-height:16px;color:#1F5BB2;left:346.93px;width:600px;text-align:right;transform:scaleX(1.0616);transform-origin:100% 0;">Hodiny</div>
<div class="t" style="top:351.74px;font-size:12px;line-height:16px;color:#1F5BB2;left:403.75px;width:600px;text-align:right;transform:scaleX(0.8780);transform-origin:100% 0;">Sazba</div>
<div class="t" style="top:351.74px;font-size:12px;line-height:16px;color:#1F5BB2;left:525.91px;width:600px;text-align:right;transform:scaleX(0.9148);transform-origin:100% 0;">Částka</div>
<div class="t" style="top:375.13px;font-size:12.6px;line-height:16px;color:#000;left:182.76px;transform:scaleX(1.0125);transform-origin:0 0;">6320</div>
<div class="t" style="top:375.13px;font-size:12.6px;line-height:16px;color:#000;left:289.32px;transform:scaleX(1.0686);transform-origin:0 0;">Dohoda o provedení práce</div>
<div class="t" style="top:375.13px;font-size:12.6px;line-height:16px;color:#000;left:475.61px;transform:scaleX(1.0504);transform-origin:0 0;">únor 2024</div>
<div class="t" style="top:375.13px;font-size:12.6px;line-height:16px;color:#000;left:45.90px;width:600px;text-align:right;transform:scaleX(0.9861);transform-origin:100% 0;">01.02.2024</div>
<div class="t" style="top:375.13px;font-size:12.6px;line-height:16px;color:#000;left:126.90px;width:600px;text-align:right;transform:scaleX(0.9901);transform-origin:100% 0;">29.02.2024</div>
<div class="t" style="top:375.13px;font-size:12.6px;line-height:16px;color:#000;left:204.03px;width:600px;text-align:right;transform:scaleX(0.9498);transform-origin:100% 0;">0,00</div>
<div class="t" style="top:375.13px;font-size:12.6px;line-height:16px;color:#000;left:266.23px;width:600px;text-align:right;transform:scaleX(0.9498);transform-origin:100% 0;">0,00</div>
<div class="t" style="top:375.13px;font-size:12.6px;line-height:16px;color:#000;left:346.57px;width:600px;text-align:right;transform:scaleX(0.9741);transform-origin:100% 0;">30,000</div>
<div class="t" style="top:375.13px;font-size:12.6px;line-height:16px;color:#000;left:404.27px;width:600px;text-align:right;transform:scaleX(0.9820);transform-origin:100% 0;">150,00</div>
<div class="t" style="top:375.13px;font-size:12.6px;line-height:16px;color:#000;left:526.40px;width:600px;text-align:right;transform:scaleX(0.9817);transform-origin:100% 0;">4 500,00</div>
<div class="t" style="top:397.13px;font-size:12.6px;line-height:16px;color:#000;left:182.87px;transform:scaleX(1.0467);transform-origin:0 0;">9110</div>
<div class="t" style="top:397.13px;font-size:12.6px;line-height:16px;color:#000;left:290.01px;transform:scaleX(1.0369);transform-origin:0 0;">Zálohová daň</div>
<div class="t" style="top:397.13px;font-size:12.6px;line-height:16px;color:#000;left:475.61px;transform:scaleX(1.0504);transform-origin:0 0;">únor 2024</div>
<div class="t" style="top:397.13px;font-size:12.6px;line-height:16px;color:#000;left:45.90px;width:600px;text-align:right;transform:scaleX(0.9861);transform-origin:100% 0;">01.02.2024</div>
<div class="t" style="top:397.13px;font-size:12.6px;line-height:16px;color:#000;left:126.90px;width:600px;text-align:right;transform:scaleX(0.9901);transform-origin:100% 0;">29.02.2024</div>
<div class="t" style="top:397.13px;font-size:12.6px;line-height:16px;color:#000;left:204.03px;width:600px;text-align:right;transform:scaleX(0.9498);transform-origin:100% 0;">0,00</div>
<div class="t" style="top:397.13px;font-size:12.6px;line-height:16px;color:#000;left:266.23px;width:600px;text-align:right;transform:scaleX(0.9498);transform-origin:100% 0;">0,00</div>
<div class="t" style="top:397.13px;font-size:12.6px;line-height:16px;color:#000;left:346.50px;width:600px;text-align:right;transform:scaleX(0.9921);transform-origin:100% 0;">0,000</div>
<div class="t" style="top:397.13px;font-size:12.6px;line-height:16px;color:#000;left:404.23px;width:600px;text-align:right;transform:scaleX(0.9498);transform-origin:100% 0;">0,00</div>
<div class="t" style="top:397.13px;font-size:12.6px;line-height:16px;color:#000;left:526.43px;width:600px;text-align:right;transform:scaleX(0.9498);transform-origin:100% 0;">0,00</div>
<div class="t" style="top:419.13px;font-size:12.6px;line-height:16px;color:#000;left:182.89px;transform:scaleX(1.0078);transform-origin:0 0;">9990</div>
<div class="t" style="top:419.13px;font-size:12.6px;line-height:16px;color:#000;left:290.40px;transform:scaleX(1.0384);transform-origin:0 0;">Výplata mzdy</div>
<div class="t" style="top:419.13px;font-size:12.6px;line-height:16px;color:#000;left:475.61px;transform:scaleX(1.0504);transform-origin:0 0;">únor 2024</div>
<div class="t" style="top:419.13px;font-size:12.6px;line-height:16px;color:#000;left:45.90px;width:600px;text-align:right;transform:scaleX(0.9861);transform-origin:100% 0;">01.02.2024</div>
<div class="t" style="top:419.13px;font-size:12.6px;line-height:16px;color:#000;left:126.90px;width:600px;text-align:right;transform:scaleX(0.9901);transform-origin:100% 0;">29.02.2024</div>
<div class="t" style="top:419.13px;font-size:12.6px;line-height:16px;color:#000;left:204.03px;width:600px;text-align:right;transform:scaleX(0.9498);transform-origin:100% 0;">0,00</div>
<div class="t" style="top:419.13px;font-size:12.6px;line-height:16px;color:#000;left:266.23px;width:600px;text-align:right;transform:scaleX(0.9498);transform-origin:100% 0;">0,00</div>
<div class="t" style="top:419.13px;font-size:12.6px;line-height:16px;color:#000;left:346.50px;width:600px;text-align:right;transform:scaleX(0.9921);transform-origin:100% 0;">0,000</div>
<div class="t" style="top:419.13px;font-size:12.6px;line-height:16px;color:#000;left:404.23px;width:600px;text-align:right;transform:scaleX(0.9498);transform-origin:100% 0;">0,00</div>
<div class="t" style="top:419.13px;font-size:12.6px;line-height:16px;color:#000;left:526.40px;width:600px;text-align:right;transform:scaleX(0.9817);transform-origin:100% 0;">4 500,00</div>
<div class="a" style="left:1126px;top:349px;width:17px;height:385px;background:#F0F0F0;"></div>
<svg class="a" style="left:1131px;top:355px;" width="8" height="6" viewBox="0 0 8 6"><path d="M0.5 5.5L4.0 0.8L7.5 5.5" fill="none" stroke="#444" stroke-width="2.2"/></svg>
<div class="a" style="left:1127px;top:646px;width:15px;height:17px;background:#CDCDCD;"></div>
<svg class="a" style="left:1130.5px;top:739px;" width="8" height="6" viewBox="0 0 8 6"><path d="M0.8 0.8L4 4.6L7.2 0.8" fill="none" stroke="#444" stroke-width="2.2"/></svg>
<div class="a" style="left:79px;top:734px;width:1047px;height:16px;background:#F0F0F0;"></div>
<svg class="a" style="left:84px;top:737.5px;" width="6" height="8" viewBox="0 0 6 8"><path d="M5.2 0.8L1.2 3.8L5.2 6.8" fill="none" stroke="#444" stroke-width="2.2"/></svg>
<div class="a" style="left:96px;top:734px;width:17px;height:15px;background:#CDCDCD;"></div>
<svg class="a" style="left:1115px;top:738px;" width="6" height="8" viewBox="0 0 6 8"><path d="M0.8 0.8L4.8 3.8L0.8 6.8" fill="none" stroke="#444" stroke-width="2.2"/></svg>
<div class="a" style="left:1126px;top:734px;width:1px;height:16px;background:#fff;"></div>
<div class="a" style="left:79px;top:733px;width:1047px;height:1px;background:#fff;"></div>
<div class="a" style="left:79px;top:750px;width:1064px;height:1px;background:#CACACA;"></div>
<div class="a" style="left:79px;top:751px;width:1064px;height:25px;background:#F0F0F0;"></div>
<div class="a" style="left:79px;top:753px;width:1px;height:23px;background:#D0D0D0;"></div>
<div class="a" style="left:71px;top:783px;width:1080px;height:1px;background:#D0D0D0;"></div>
<svg class="a" style="left:84px;top:755px;" width="17" height="17" viewBox="0 0 17 17"><rect x="6.65" y="1.10" width="3.5" height="14.8" fill="#1F5FAF" transform="rotate(0 8.4 8.5)"/><rect x="6.65" y="1.10" width="3.5" height="14.8" fill="#1F5FAF" transform="rotate(60 8.4 8.5)"/><rect x="6.65" y="1.10" width="3.5" height="14.8" fill="#1F5FAF" transform="rotate(120 8.4 8.5)"/><rect x="7.80" y="2.25" width="1.2" height="12.5" fill="#F0F0F0" transform="rotate(0 8.4 8.5)"/><rect x="7.80" y="2.25" width="1.2" height="12.5" fill="#F0F0F0" transform="rotate(60 8.4 8.5)"/><rect x="7.80" y="2.25" width="1.2" height="12.5" fill="#F0F0F0" transform="rotate(120 8.4 8.5)"/></svg>
<div class="t" style="top:755.84px;font-size:12px;line-height:16px;color:#1F5FAF;left:-187.96px;width:600px;text-align:center;transform:scaleX(1.0204);transform-origin:50% 0;">0</div>
<div class="a" style="left:122px;top:753px;width:1px;height:21px;background:#D5D5D5;"></div>
<div class="t" style="top:755.84px;font-size:12px;line-height:16px;color:#1F5FAF;left:128.76px;transform:scaleX(0.9795);transform-origin:0 0;">Počet záznamů: 4/6</div>
<div class="a" style="left:239px;top:753px;width:1px;height:21px;background:#D5D5D5;"></div>
<div class="a" style="left:1067px;top:753px;width:1px;height:21px;background:#D5D5D5;"></div>
<div class="a" style="left:1093px;top:753px;width:1px;height:21px;background:#D5D5D5;"></div>
<svg class="a" style="left:1074px;top:757px;" width="13" height="14" viewBox="0 0 13 14"><path d="M12.5 2V0.8H0.8L6.5 7L0.8 13.2H12.5V12" fill="none" stroke="#1F5FAF" stroke-width="1.4"/></svg>
<svg class="a" style="left:1099px;top:756px;" width="16" height="16" viewBox="0 0 16 16"><path d="M1.2 13.8L2.3 10.2L10.6 1.9Q11.6 0.9 12.8 2L13.6 2.8Q14.6 3.9 13.6 4.9L5.3 13.2Z" fill="none" stroke="#1F5FAF" stroke-width="1.3" stroke-linejoin="round"/><path d="M6.8 14.3H14.7" stroke="#1F5FAF" stroke-width="1.5"/></svg>
<svg class="a" style="left:1121px;top:754px;" width="20" height="20" viewBox="0 0 20 20"><rect x="0.7" y="1.7" width="13" height="11.8" fill="none" stroke="#1F5FAF" stroke-width="1.3"/><rect x="3" y="3.8" width="13.2" height="12" fill="#F0F0F0" stroke="#1F5FAF" stroke-width="1.3"/><path d="M5.3 6.6H6.3M5.3 9.2H6.3M5.3 11.7H6.3" stroke="#1F5FAF" stroke-width="1.1"/><path d="M7.6 6.6H14M7.6 9.2H14M7.6 11.7H11" stroke="#4F86C6" stroke-width="1.2"/><circle cx="14.5" cy="14.6" r="4.1" fill="#fff" stroke="#1F5FAF" stroke-width="1.3"/><path d="M14.5 12.3V16.9M12.2 14.6H16.8" stroke="#1F5FAF" stroke-width="1.3"/></svg>
<div class="a" style="left:850px;top:189px;width:260px;height:68px;border:5px solid #ED1C24;"></div>
<div class="a" style="left:870px;top:343px;width:93px;height:54px;border:5px solid #ED1C24;"></div>
<div class="a" style="left:1154px;top:34px;width:7px;height:750px;background:#00AEEF;"></div>
<svg class="a" style="left:1155px;top:396px;" width="6" height="24" viewBox="0 0 6 24"><circle cx="2.6" cy="3" r="1.9" fill="#6FD0F5"/><circle cx="2.6" cy="11.8" r="1.9" fill="#6FD0F5"/><circle cx="2.6" cy="21" r="1.9" fill="#6FD0F5"/></svg>
<div class="a" style="left:1164px;top:34px;width:285px;height:750px;background:#0054A6;"></div>
<div class="t" style="top:43.08px;font-size:22px;line-height:29px;color:#fff;left:1168.28px;transform:scaleX(0.9756);transform-origin:0 0;-webkit-text-stroke:0;">MZ//3642</div>
<svg class="a" style="left:1426px;top:47px;" width="16" height="16" viewBox="0 0 16 16"><path d="M5.1 1.6H13.8V9.9" fill="none" stroke="#fff" stroke-width="1.3"/><path d="M5 5.6H1.6V13.7H9.7V10.2" fill="none" stroke="#fff" stroke-width="1.3"/><path d="M5.6 9.4L9.6 5.4" stroke="#fff" stroke-width="1.3"/><path d="M7 4.1H11V8.1Z" fill="#fff"/></svg>
<div class="a" style="left:1167px;top:76px;width:279px;height:25px;background:#00AEEF;"></div>
<div class="t" style="top:81.19px;font-size:13.6px;line-height:18px;color:#fff;font-weight:bold;left:1171.14px;transform:scaleX(0.9631);transform-origin:0 0;">Základní informace</div>
<div class="a" style="left:1421px;top:79px;width:1px;height:19px;background:#1E9ACF;"></div>
<svg class="a" style="left:1427px;top:85px;" width="14" height="8" viewBox="0 0 14 8"><path d="M0.6 7.3L7 1L13.4 7.3" fill="none" stroke="#fff" stroke-width="1.3"/></svg>
<div class="a" style="left:1167px;top:101px;width:279px;height:240px;background:#FCFCFC;"></div>
<div class="t" style="top:106.64px;font-size:12px;line-height:16px;color:#1B4FAE;left:1173.55px;transform:scaleX(0.9868);transform-origin:0 0;">Pracovník:</div>
<div class="t" style="top:106.64px;font-size:12px;line-height:16px;color:#000;left:839.23px;width:600px;text-align:right;transform:scaleX(0.9925);transform-origin:100% 0;">Dohodář Pan</div>
<div class="a" style="left:1174px;top:122px;width:265px;height:1px;background:#E4E4E4;"></div>
<div class="t" style="top:128.64px;font-size:12px;line-height:16px;color:#1B4FAE;left:1174.03px;transform:scaleX(0.9851);transform-origin:0 0;">Osobní číslo:</div>
<div class="t" style="top:128.64px;font-size:12px;line-height:16px;color:#000;left:839.01px;width:600px;text-align:right;transform:scaleX(0.8854);transform-origin:100% 0;">016</div>
<div class="a" style="left:1174px;top:144px;width:265px;height:1px;background:#E4E4E4;"></div>
<div class="t" style="top:150.64px;font-size:12px;line-height:16px;color:#1B4FAE;left:1173.55px;transform:scaleX(0.9853);transform-origin:0 0;">Kmenové středisko:</div>
<div class="t" style="top:150.64px;font-size:12px;line-height:16px;color:#000;left:839.29px;width:600px;text-align:right;transform:scaleX(1.3333);transform-origin:100% 0;">-</div>
<div class="a" style="left:1174px;top:166px;width:265px;height:1px;background:#E4E4E4;"></div>
<div class="t" style="top:172.64px;font-size:12px;line-height:16px;color:#1B4FAE;left:1173.57px;transform:scaleX(0.9730);transform-origin:0 0;">Právní vztah:</div>
<div class="t" style="top:172.64px;font-size:12px;line-height:16px;color:#000;left:839.08px;width:600px;text-align:right;transform:scaleX(0.9905);transform-origin:100% 0;">Dohoda o provedení práce</div>
<div class="a" style="left:1174px;top:188px;width:265px;height:1px;background:#E4E4E4;"></div>
<div class="t" style="top:194.64px;font-size:12px;line-height:16px;color:#1B4FAE;left:1173.54px;">Pořadí:</div>
<div class="t" style="top:194.64px;font-size:12px;line-height:16px;color:#000;left:839.18px;width:600px;text-align:right;transform:scaleX(1.0417);transform-origin:100% 0;">1</div>
<div class="a" style="left:1174px;top:210px;width:265px;height:1px;background:#E4E4E4;"></div>
<div class="t" style="top:216.64px;font-size:12px;line-height:16px;color:#1B4FAE;left:1173.53px;transform:scaleX(1.0130);transform-origin:0 0;">Datum vzniku:</div>
<div class="t" style="top:216.64px;font-size:12px;line-height:16px;color:#000;left:838.86px;width:600px;text-align:right;transform:scaleX(0.9040);transform-origin:100% 0;">01.01.2024</div>
<div class="a" style="left:1174px;top:232px;width:265px;height:1px;background:#E4E4E4;"></div>
<div class="t" style="top:238.64px;font-size:12px;line-height:16px;color:#1B4FAE;left:1174.04px;transform:scaleX(0.9645);transform-origin:0 0;">Středisko:</div>
<div class="t" style="top:238.64px;font-size:12px;line-height:16px;color:#000;left:839.29px;width:600px;text-align:right;transform:scaleX(1.3333);transform-origin:100% 0;">-</div>
<div class="a" style="left:1174px;top:254px;width:265px;height:1px;background:#E4E4E4;"></div>
<div class="t" style="top:260.64px;font-size:12px;line-height:16px;color:#1B4FAE;left:1173.52px;transform:scaleX(1.0216);transform-origin:0 0;">Mzdové období:</div>
<div class="t" style="top:260.64px;font-size:12px;line-height:16px;color:#000;left:838.87px;width:600px;text-align:right;transform:scaleX(0.9672);transform-origin:100% 0;">únor 2024</div>
<div class="a" style="left:1174px;top:276px;width:265px;height:1px;background:#E4E4E4;"></div>
<svg class="a" style="left:1368px;top:287px;" width="15" height="15" viewBox="0 0 15 15"><rect width="15.3" height="15.2" fill="#3DC47A"/><path d="M3.4 8L6.4 10.6L11.8 5" fill="none" stroke="#fff" stroke-width="1.4"/></svg>
<svg class="a" style="left:1420px;top:287px;" width="15" height="15" viewBox="0 0 15 15"><rect width="15.3" height="15.2" fill="#3DC47A"/><path d="M3.4 8L6.4 10.6L11.8 5" fill="none" stroke="#fff" stroke-width="1.4"/></svg>
<div class="a" style="left:1167px;top:350px;width:279px;height:25px;background:#00AEEF;"></div>
<div class="t" style="top:355.19px;font-size:13.6px;line-height:18px;color:#fff;font-weight:bold;left:1170.87px;transform:scaleX(0.9663);transform-origin:0 0;">Ostatní údaje</div>
<div class="a" style="left:1421px;top:353px;width:1px;height:19px;background:#1E9ACF;"></div>
<svg class="a" style="left:1427px;top:359px;" width="14" height="8" viewBox="0 0 14 8"><path d="M0.6 7.3L7 1L13.4 7.3" fill="none" stroke="#fff" stroke-width="1.3"/></svg>
<div class="a" style="left:1167px;top:375px;width:279px;height:146px;background:#FCFCFC;"></div>
<div class="t" style="top:380.54px;font-size:12px;line-height:16px;color:#1B4FAE;left:1174.12px;transform:scaleX(1.0443);transform-origin:0 0;">Změnil:</div>
<div class="t" style="top:380.54px;font-size:12px;line-height:16px;color:#1F5FAF;left:838.57px;width:600px;text-align:right;transform:scaleX(0.9032);transform-origin:100% 0;">14.01.2024 18:43:03</div>
<div class="t" style="top:380.54px;font-size:12px;line-height:16px;color:#000;left:1322.25px;transform:scaleX(0.9848);transform-origin:0 0;">K2</div>
<div class="a" style="left:1174px;top:396px;width:265px;height:1px;background:#E4E4E4;"></div>
<div class="t" style="top:402.54px;font-size:12px;line-height:16px;color:#1B4FAE;left:1173.52px;transform:scaleX(1.0158);transform-origin:0 0;">Předvypočetl:</div>
<div class="t" style="top:402.54px;font-size:12px;line-height:16px;color:#1F5FAF;left:838.46px;width:600px;text-align:right;transform:scaleX(0.8957);transform-origin:100% 0;">14.01.2024 18:42:14</div>
<div class="t" style="top:402.54px;font-size:12px;line-height:16px;color:#000;left:1322.25px;transform:scaleX(0.9848);transform-origin:0 0;">K2</div>
<div class="a" style="left:1174px;top:418px;width:265px;height:1px;background:#E4E4E4;"></div>
<div class="t" style="top:424.54px;font-size:12px;line-height:16px;color:#1B4FAE;left:1174.50px;transform:scaleX(1.0076);transform-origin:0 0;">Vytvořil zálohy:</div>
<div class="t" style="top:424.54px;font-size:12px;line-height:16px;color:#1F5FAF;left:838.57px;width:600px;text-align:right;transform:scaleX(0.9029);transform-origin:100% 0;">00.00.0000 00:00:00</div>
<div class="a" style="left:1174px;top:440px;width:265px;height:1px;background:#E4E4E4;"></div>
<div class="t" style="top:446.54px;font-size:12px;line-height:16px;color:#1B4FAE;left:1174.50px;transform:scaleX(1.0171);transform-origin:0 0;">Vypočetl:</div>
<div class="t" style="top:446.54px;font-size:12px;line-height:16px;color:#1F5FAF;left:838.57px;width:600px;text-align:right;transform:scaleX(0.9032);transform-origin:100% 0;">14.01.2024 18:43:03</div>
<div class="t" style="top:446.54px;font-size:12px;line-height:16px;color:#000;left:1322.25px;transform:scaleX(0.9848);transform-origin:0 0;">K2</div>
<div class="a" style="left:1174px;top:462px;width:265px;height:1px;background:#E4E4E4;"></div>
<div class="t" style="top:468.54px;font-size:12px;line-height:16px;color:#1B4FAE;left:1173.70px;transform:scaleX(0.9568);transform-origin:0 0;">Uzavřel:</div>
<div class="t" style="top:468.54px;font-size:12px;line-height:16px;color:#1F5FAF;left:838.57px;width:600px;text-align:right;transform:scaleX(0.9029);transform-origin:100% 0;">00.00.0000 00:00:00</div>
<div class="a" style="left:1174px;top:484px;width:265px;height:1px;background:#E4E4E4;"></div>
<div class="a" style="left:1174px;top:491px;width:265px;height:23px;background:#E1E1E1;border:1px solid #ADADAD;"></div>
<div class="t" style="top:494.44px;font-size:12px;line-height:16px;color:#000;left:1005.89px;width:600px;text-align:center;transform:scaleX(0.9867);transform-origin:50% 0;">Podrobné údaje o zpracování</div>
<div class="a" style="left:1167px;top:678px;width:279px;height:25px;background:#00AEEF;"></div>
<div class="t" style="top:683.19px;font-size:13.6px;line-height:18px;color:#fff;font-weight:bold;left:1170.63px;transform:scaleX(0.9387);transform-origin:0 0;">Nastavení</div>
<div class="a" style="left:1421px;top:681px;width:1px;height:19px;background:#1E9ACF;"></div>
<svg class="a" style="left:1427px;top:687px;" width="14" height="8" viewBox="0 0 14 8"><path d="M0.6 7.3L7 1L13.4 7.3" fill="none" stroke="#fff" stroke-width="1.3"/></svg>
<div class="a" style="left:1167px;top:703px;width:279px;height:78px;background:#FCFCFC;"></div>
<div class="t" style="top:709.14px;font-size:12px;line-height:16px;color:#000;left:1173.35px;transform:scaleX(0.9888);transform-origin:0 0;">Nastavené období</div>
<div class="t" style="top:709.14px;font-size:12px;line-height:16px;color:#000;left:838.91px;width:600px;text-align:right;transform:scaleX(0.9564);transform-origin:100% 0;">2024/02</div>
<div class="t" style="top:730.04px;font-size:12px;line-height:16px;color:#000;left:1173.94px;transform:scaleX(0.9953);transform-origin:0 0;">Zpracované období</div>
<div class="t" style="top:730.04px;font-size:12px;line-height:16px;color:#000;left:838.91px;width:600px;text-align:right;transform:scaleX(0.9564);transform-origin:100% 0;">2024/01</div>
<div class="a" style="left:1175px;top:754px;width:17px;height:17px;background:#fff;border:1px solid #1F4E9F;"></div>
<div class="t" style="top:755.14px;font-size:12px;line-height:16px;color:#1B4FAE;left:1197.57px;transform:scaleX(0.9928);transform-origin:0 0;">Úplný výpis položek</div>
</body></html>
